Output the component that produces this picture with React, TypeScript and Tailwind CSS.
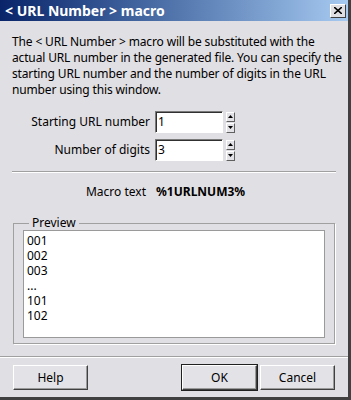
import React from "react";

const font = { fontFamily: '"Noto Sans", "DejaVu Sans", sans-serif' };

const Spinner = () => (
  <div className="flex flex-col gap-[1px] ml-[3px]">
    {["up", "down"].map((d) => (
      <div
        key={d}
        className="w-[9px] h-[10px] bg-[#e3e3e7] border border-t-white border-l-white border-r-[#606060] border-b-[#606060] flex items-center justify-center"
      >
        <svg width="5" height="3" viewBox="0 0 5 3">
          {d === "up" ? (
            <path d="M2.5 0 L5 3 L0 3 Z" fill="#000" />
          ) : (
            <path d="M0 0 L5 0 L2.5 3 Z" fill="#000" />
          )}
        </svg>
      </div>
    ))}
  </div>
);

const Field = ({ label, value }: { label: string; value: string }) => (
  <div className="flex items-center">
    <span className="w-[143px] text-right pr-[5px]">{label}</span>
    <div className="w-[68px] h-[22px] bg-white border border-t-[#7a7a7a] border-l-[#7a7a7a] border-r-white border-b-white shadow-[inset_1px_1px_0_#303030] pl-[2px] leading-[20px]">
      {value}
    </div>
    <Spinner />
  </div>
);

const Btn = ({ children, def }: { children: React.ReactNode; def?: boolean }) => (
  <button
    className={`w-[75px] h-[25px] bg-[#e3e3e7] border border-t-white border-l-white border-r-[#404040] border-b-[#404040] shadow-[inset_-1px_-1px_0_#9a9a9a] ${
      def ? "outline outline-1 outline-[#202020]" : ""
    }`}
  >
    {children}
  </button>
);

export default function App() {
  return (
    <div
      className="w-[351px] h-[400px] bg-[#e0dfe3] text-[12px] text-black flex flex-col border-r-[3px] border-b-[3px] border-r-[#404040] border-b-[#404040]"
      style={font}
    >
      {/* Title bar */}
      <div className="h-[21px] flex items-center justify-between pl-[5px] pr-[2px] bg-gradient-to-r from-[#0a246a] to-[#a6caf0]">
        <span className="text-white font-bold text-[14px]">&lt; URL Number &gt; macro</span>
        <div className="w-[16px] h-[14px] bg-[#e0dfe3] border border-t-white border-l-white border-r-[#404040] border-b-[#404040] flex items-center justify-center">
          <svg width="8" height="7" viewBox="0 0 8 7">
            <path d="M0 0 L8 7 M8 0 L0 7" stroke="#000" strokeWidth="1.6" />
          </svg>
        </div>
      </div>

      <div className="flex-1 flex flex-col px-[12px]">
        <p className="mt-[13px] leading-[16px] whitespace-nowrap tracking-[-0.15px]">
          The &lt; URL Number &gt; macro will be substituted with the
          <br />
          actual URL number in the generated file. You can specify the
          <br />
          starting URL number and the number of digits in the URL
          <br />
          number using this window.
        </p>

        <div className="mt-[13px] flex flex-col gap-[6px]">
          <Field label="Starting URL number" value="1" />
          <Field label="Number of digits" value="3" />
        </div>

        <div className="mt-[10px] h-[2px] border-t border-t-[#a0a0a0] border-b border-b-white" />

        <div className="mt-[10px] flex items-center">
          <span className="w-[134px] text-right">Macro text</span>
          <span className="ml-[10px] font-bold">%1URLNUM3%</span>
        </div>

        <fieldset className="mt-[15px] mx-[1px] border border-[#a0a0a0] shadow-[1px_1px_0_white] px-[9px] pb-[5px]">
          <legend className="ml-[6px] px-[3px] leading-[14px]">Preview</legend>
          <div className="h-[108px] bg-white border border-[#9a9a9a] pl-[3px] pt-[2px] flex flex-col">
            {["001", "002", "003", "...", "101", "102"].map((t) => (
              <div key={t} className="h-[15px] leading-[15px]">
                {t}
              </div>
            ))}
          </div>
        </fieldset>
      </div>

      <div className="h-[2px] border-t border-t-[#a0a0a0] border-b border-b-white" />

      <div className="flex items-center px-[13px] pt-[7px] pb-[7px]">
        <Btn>Help</Btn>
        <div className="flex-1" />
        <Btn def>OK</Btn>
        <div className="w-[3px]" />
        <Btn>Cancel</Btn>
      </div>
    </div>
  );
}
